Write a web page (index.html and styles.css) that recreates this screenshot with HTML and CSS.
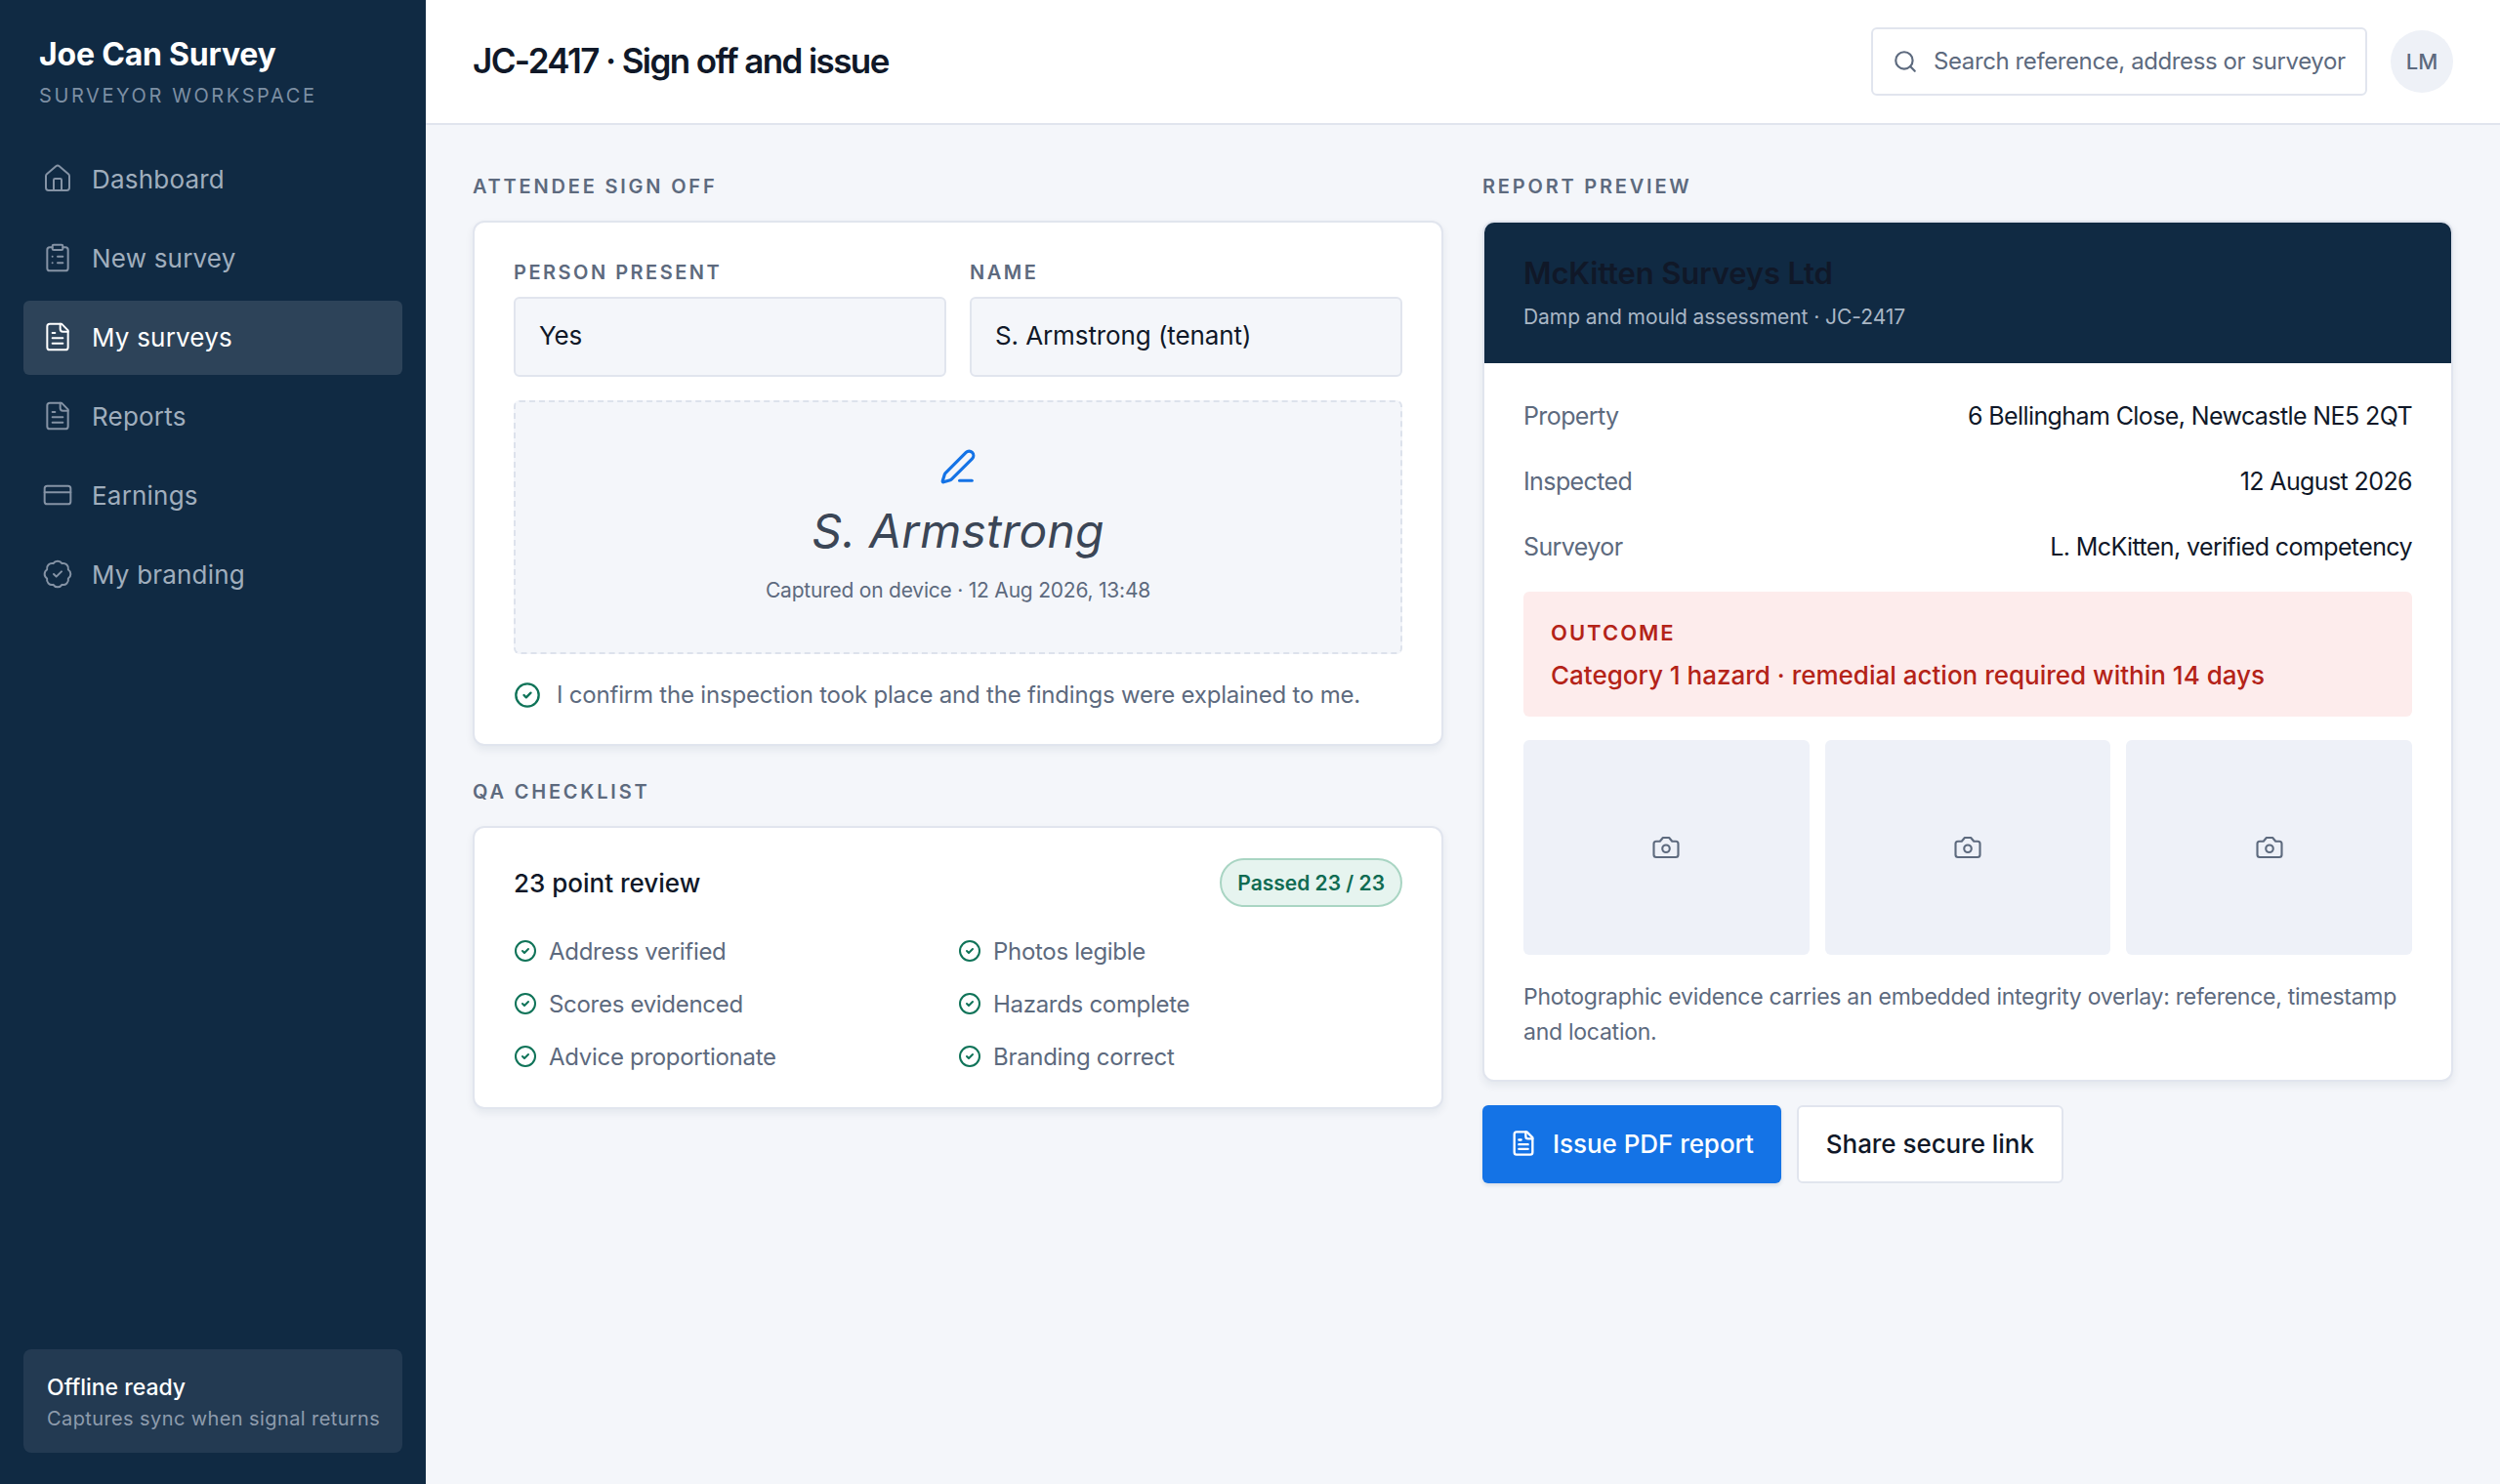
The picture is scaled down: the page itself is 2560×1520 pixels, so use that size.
FILE: index.html
```html
<!DOCTYPE html>
<html lang="en">
<head>
    <meta charset="UTF-8">
    <title>Joe Can Survey</title>
    <link rel="stylesheet" href="styles.css">
</head>
<body>
<div class="app">
    <aside class="sidebar">
        <div class="brand">
            <div class="brand-name">Joe Can Survey</div>
            <div class="brand-sub">SURVEYOR WORKSPACE</div>
        </div>
        <nav class="nav">
            <a class="nav-item"><svg class="nav-icon" viewBox="0 0 24 24"><path d="M15 21v-8a1 1 0 0 0-1-1h-4a1 1 0 0 0-1 1v8"/><path d="M3 10a2 2 0 0 1 .709-1.528l7-5.999a2 2 0 0 1 2.582 0l7 5.999A2 2 0 0 1 21 10v9a2 2 0 0 1-2 2H5a2 2 0 0 1-2-2z"/></svg>Dashboard</a>
            <a class="nav-item"><svg class="nav-icon" viewBox="0 0 24 24"><rect x="8" y="2" width="8" height="4" rx="1"/><path d="M16 4h2a2 2 0 0 1 2 2v14a2 2 0 0 1-2 2H6a2 2 0 0 1-2-2V6a2 2 0 0 1 2-2h2"/><path d="M12 11h4M12 16h4M8 11h.01M8 16h.01"/></svg>New survey</a>
            <a class="nav-item active"><svg class="nav-icon" viewBox="0 0 24 24"><path d="M15 2H6a2 2 0 0 0-2 2v16a2 2 0 0 0 2 2h12a2 2 0 0 0 2-2V7z"/><path d="M14 2v4a2 2 0 0 0 2 2h4"/><path d="M10 9H8M16 13H8M16 17H8"/></svg>My surveys</a>
            <a class="nav-item"><svg class="nav-icon" viewBox="0 0 24 24"><path d="M15 2H6a2 2 0 0 0-2 2v16a2 2 0 0 0 2 2h12a2 2 0 0 0 2-2V7z"/><path d="M14 2v4a2 2 0 0 0 2 2h4"/><path d="M10 9H8M16 13H8M16 17H8"/></svg>Reports</a>
            <a class="nav-item"><svg class="nav-icon" viewBox="0 0 24 24"><rect x="2" y="5" width="20" height="14" rx="2"/><path d="M2 10h20"/></svg>Earnings</a>
            <a class="nav-item"><svg class="nav-icon" viewBox="0 0 24 24"><path d="M3.85 8.62a4 4 0 0 1 4.78-4.77 4 4 0 0 1 6.74 0 4 4 0 0 1 4.78 4.78 4 4 0 0 1 0 6.74 4 4 0 0 1-4.77 4.78 4 4 0 0 1-6.75 0 4 4 0 0 1-4.78-4.77 4 4 0 0 1 0-6.76z"/><path d="M9 12l2 2 4-4"/></svg>My branding</a>
        </nav>
        <div class="offline">
            <div class="offline-title">Offline ready</div>
            <div class="offline-sub">Captures sync when signal returns</div>
        </div>
    </aside>
    <div class="main">
        <header class="topbar">
            <h1>JC-2417 · Sign off and issue</h1>
            <div class="topbar-right">
                <div class="search">
                    <svg class="search-icon" viewBox="0 0 24 24"><circle cx="11" cy="11" r="8"/><path d="M21 21l-4.3-4.3"/></svg>
                    <span>Search reference, address or surveyor</span>
                </div>
                <div class="avatar">LM</div>
            </div>
        </header>
        <div class="content">
            <section class="col-left">
                <h2 class="section-title">ATTENDEE SIGN OFF</h2>
                <div class="card signoff">
                    <div class="fields">
                        <div class="field">
                            <label>PERSON PRESENT</label>
                            <div class="input">Yes</div>
                        </div>
                        <div class="field">
                            <label>NAME</label>
                            <div class="input">S. Armstrong (tenant)</div>
                        </div>
                    </div>
                    <div class="signature">
                        <svg class="pen" viewBox="0 0 24 24"><path d="M13 21h8"/><path d="M21.174 6.812a1 1 0 0 0-3.986-3.987L3.842 16.174a2 2 0 0 0-.5.83l-1.321 4.352a.5.5 0 0 0 .623.622l4.353-1.32a2 2 0 0 0 .83-.497z"/></svg>
                        <div class="sig-name">S. Armstrong</div>
                        <div class="sig-meta">Captured on device · 12 Aug 2026, 13:48</div>
                    </div>
                    <div class="confirm">
                        <svg class="check" viewBox="0 0 24 24"><circle cx="12" cy="12" r="10"/><path d="M9 12l2 2 4-4"/></svg>
                        <span>I confirm the inspection took place and the findings were explained to me.</span>
                    </div>
                </div>
                <h2 class="section-title qa-title">QA CHECKLIST</h2>
                <div class="card qa">
                    <div class="qa-head">
                        <div class="qa-name">23 point review</div>
                        <div class="badge">Passed 23 / 23</div>
                    </div>
                    <div class="qa-grid">
                        <div class="qa-item"><svg class="check" viewBox="0 0 24 24"><circle cx="12" cy="12" r="10"/><path d="M9 12l2 2 4-4"/></svg>Address verified</div>
                        <div class="qa-item"><svg class="check" viewBox="0 0 24 24"><circle cx="12" cy="12" r="10"/><path d="M9 12l2 2 4-4"/></svg>Photos legible</div>
                        <div class="qa-item"><svg class="check" viewBox="0 0 24 24"><circle cx="12" cy="12" r="10"/><path d="M9 12l2 2 4-4"/></svg>Scores evidenced</div>
                        <div class="qa-item"><svg class="check" viewBox="0 0 24 24"><circle cx="12" cy="12" r="10"/><path d="M9 12l2 2 4-4"/></svg>Hazards complete</div>
                        <div class="qa-item"><svg class="check" viewBox="0 0 24 24"><circle cx="12" cy="12" r="10"/><path d="M9 12l2 2 4-4"/></svg>Advice proportionate</div>
                        <div class="qa-item"><svg class="check" viewBox="0 0 24 24"><circle cx="12" cy="12" r="10"/><path d="M9 12l2 2 4-4"/></svg>Branding correct</div>
                    </div>
                </div>
            </section>
            <section class="col-right">
                <h2 class="section-title">REPORT PREVIEW</h2>
                <div class="card report">
                    <div class="report-head">
                        <div class="report-company">McKitten Surveys Ltd</div>
                        <div class="report-sub">Damp and mould assessment · JC-2417</div>
                    </div>
                    <div class="report-body">
                        <div class="row"><span class="row-key">Property</span><span class="row-val">6 Bellingham Close, Newcastle NE5 2QT</span></div>
                        <div class="row"><span class="row-key">Inspected</span><span class="row-val">12 August 2026</span></div>
                        <div class="row"><span class="row-key">Surveyor</span><span class="row-val">L. McKitten, verified competency</span></div>
                        <div class="outcome">
                            <div class="outcome-label">OUTCOME</div>
                            <div class="outcome-text">Category 1 hazard · remedial action required within 14 days</div>
                        </div>
                        <div class="photos">
                            <div class="photo"><svg viewBox="0 0 24 24"><path d="M14.5 4h-5L7 7H4a2 2 0 0 0-2 2v9a2 2 0 0 0 2 2h16a2 2 0 0 0 2-2V9a2 2 0 0 0-2-2h-3z"/><circle cx="12" cy="13" r="3"/></svg></div>
                            <div class="photo"><svg viewBox="0 0 24 24"><path d="M14.5 4h-5L7 7H4a2 2 0 0 0-2 2v9a2 2 0 0 0 2 2h16a2 2 0 0 0 2-2V9a2 2 0 0 0-2-2h-3z"/><circle cx="12" cy="13" r="3"/></svg></div>
                            <div class="photo"><svg viewBox="0 0 24 24"><path d="M14.5 4h-5L7 7H4a2 2 0 0 0-2 2v9a2 2 0 0 0 2 2h16a2 2 0 0 0 2-2V9a2 2 0 0 0-2-2h-3z"/><circle cx="12" cy="13" r="3"/></svg></div>
                        </div>
                        <p class="photo-note">Photographic evidence carries an embedded integrity overlay: reference, timestamp and location.</p>
                    </div>
                </div>
                <div class="actions">
                    <button class="btn btn-primary"><svg viewBox="0 0 24 24"><path d="M15 2H6a2 2 0 0 0-2 2v16a2 2 0 0 0 2 2h12a2 2 0 0 0 2-2V7z"/><path d="M14 2v4a2 2 0 0 0 2 2h4"/><path d="M10 9H8M16 13H8M16 17H8"/></svg>Issue PDF report</button>
                    <button class="btn btn-secondary">Share secure link</button>
                </div>
            </section>
        </div>
    </div>
</div>
</body>
</html>
```

FILE: styles.css
```css
* {
    box-sizing: border-box;
}

body {
    margin: 0;
    font-family: Inter, "Liberation Sans", sans-serif;
    background-color: #f4f6fa;
    color: #101828;
}

svg {
    fill: none;
    stroke: currentColor;
    stroke-width: 2;
    stroke-linecap: round;
    stroke-linejoin: round;
    flex-shrink: 0;
}

.app {
    display: flex;
    height: 1520px;
}

/* Sidebar */
.sidebar {
    width: 436px;
    background-color: #102a43;
    padding: 0 24px 32px;
    display: flex;
    flex-direction: column;
}

.brand {
    padding: 36px 16px 0;
    height: 146px;
}

.brand-name {
    font-size: 32px;
    font-weight: 700;
    letter-spacing: -0.2px;
    line-height: 40px;
    color: #fff;
}

.brand-sub {
    font-size: 20px;
    letter-spacing: 2.6px;
    line-height: 28px;
    margin-top: 8px;
    color: #7d8fa3;
}

.nav {
    display: flex;
    flex-direction: column;
    gap: 5px;
}

.nav-item {
    display: flex;
    align-items: center;
    gap: 19px;
    height: 76px;
    padding: 0 16px 2px 19px;
    border-radius: 6px;
    font-size: 26px;
    letter-spacing: 0.2px;
    color: #a0aebd;
}

.nav-item.active {
    background-color: #2d4359;
    color: #fff;
}

.nav-icon {
    width: 32px;
    height: 32px;
    stroke-width: 1.5;
    color: #8593a5;
}

.active .nav-icon {
    color: #fff;
}

.offline {
    margin-top: auto;
    background-color: #233a52;
    border-radius: 8px;
    padding: 24px 24px;
    height: 106px;
}

.offline-title {
    font-size: 23px;
    font-weight: 500;
    color: #fff;
    line-height: 30px;
}

.offline-sub {
    font-size: 20px;
    letter-spacing: 0.4px;
    color: #8e9cad;
    line-height: 28px;
    margin-top: 3px;
    white-space: nowrap;
}

/* Top bar */
.main {
    flex: 1;
    display: flex;
    flex-direction: column;
}

.topbar {
    height: 128px;
    background-color: #fff;
    border-bottom: 2px solid #e1e5ee;
    display: flex;
    align-items: center;
    justify-content: space-between;
    padding: 0 48px;
}

h1 {
    margin: 0 0 2px;
    font-size: 35px;
    font-weight: 600;
    letter-spacing: -1.6px;
}

.topbar-right {
    display: flex;
    align-items: center;
    gap: 24px;
}

.search {
    width: 508px;
    height: 70px;
    border: 2px solid #e1e5ee;
    border-radius: 6px;
    display: flex;
    align-items: center;
    gap: 16px;
    padding: 0 20px;
    font-size: 24px;
    letter-spacing: -0.4px;
    color: #5d6a7e;
    white-space: nowrap;
}

.search span {
    margin-bottom: 2px;
}

.search-icon {
    width: 26px;
    height: 26px;
}

.avatar {
    width: 64px;
    height: 64px;
    border-radius: 50%;
    background-color: #eef1f7;
    display: flex;
    align-items: center;
    justify-content: center;
    font-size: 22px;
    font-weight: 500;
    color: #5d6a7e;
}

/* Content */
.content {
    display: grid;
    grid-template-columns: 1fr 1fr;
    gap: 40px;
    padding: 49px 48px 48px;
    align-items: start;
}

.section-title {
    margin: 0 0 21px;
    font-size: 20px;
    font-weight: 600;
    letter-spacing: 2.8px;
    line-height: 28px;
    color: #5d6a7e;
}

.card {
    background-color: #fff;
    border: 2px solid #e1e5ee;
    border-radius: 12px;
    box-shadow: 0 4px 8px rgba(16, 42, 67, 0.07);
}

.signoff {
    padding: 37px 40px 30px;
}

.fields {
    display: grid;
    grid-template-columns: 1fr 1fr;
    gap: 24px;
}

.field label {
    display: block;
    font-size: 20px;
    font-weight: 600;
    letter-spacing: 2.5px;
    line-height: 28px;
    color: #5d6a7e;
    margin-bottom: 11px;
}

.input {
    height: 82px;
    background-color: #f4f6fa;
    border: 2px solid #e1e5ee;
    border-radius: 6px;
    display: flex;
    align-items: center;
    padding: 0 24px 4px;
    font-size: 26px;
    letter-spacing: -0.1px;
}

.signature {
    margin-top: 24px;
    height: 260px;
    background-color: #f4f6fa;
    border: 2px dashed #dde2ec;
    border-radius: 6px;
    display: flex;
    flex-direction: column;
    align-items: center;
    padding-top: 47px;
}

.pen {
    width: 38px;
    height: 38px;
    color: #1473e6;
}

.sig-name {
    font-size: 48px;
    font-style: italic;
    line-height: 60px;
    letter-spacing: 0.2px;
    color: #3b4656;
    margin-top: 17px;
}

.sig-meta {
    font-size: 21px;
    letter-spacing: -0.22px;
    color: #5d6a7e;
    line-height: 30px;
    margin-top: 16px;
}

.confirm {
    display: flex;
    align-items: center;
    gap: 16px;
    margin-top: 22px;
    font-size: 24px;
    letter-spacing: -0.2px;
    color: #5d6a7e;
    line-height: 40px;
    white-space: nowrap;
}

.check {
    width: 28px;
    height: 28px;
    color: #0f7358;
}

.qa-title {
    margin-top: 33px;
}

.qa {
    padding: 31px 40px 25px;
}

.qa-head {
    display: flex;
    justify-content: space-between;
    align-items: center;
    margin-bottom: 18px;
}

.qa-name {
    font-size: 26px;
    font-weight: 500;
}

.badge {
    height: 50px;
    padding: 0 16px;
    background-color: #e6f4ef;
    border: 2px solid #a9d5c3;
    border-radius: 25px;
    display: flex;
    align-items: center;
    font-size: 21px;
    font-weight: 600;
    color: #0f6b52;
}

.qa-grid {
    display: grid;
    grid-template-columns: 1fr 1fr;
}

.qa-item {
    display: flex;
    align-items: center;
    gap: 12px;
    height: 54px;
    font-size: 24px;
    letter-spacing: -0.3px;
    color: #5d6a7e;
}

.qa-item .check {
    width: 24px;
    height: 24px;
}

/* Report preview */
.report {
    overflow: hidden;
}

.report-head {
    height: 144px;
    background-color: #102a43;
    padding: 32px 40px 0;
}

.report-company {
    font-size: 31px;
    font-weight: 600;
    letter-spacing: -0.15px;
    line-height: 40px;
    color: #101828;
}

.report-sub {
    font-size: 21px;
    letter-spacing: -0.05px;
    line-height: 30px;
    margin-top: 10px;
    color: #a9b6c5;
}

.report-body {
    padding: 21px 40px 31px;
}

.row {
    display: flex;
    justify-content: space-between;
    align-items: center;
    height: 67px;
    padding-bottom: 2px;
    font-size: 25px;
    letter-spacing: -0.6px;
}

.row-key {
    color: #5d6a7e;
}

.outcome {
    margin-top: 12px;
    background-color: #fdecec;
    border-radius: 6px;
    padding: 27px 28px;
    height: 128px;
}

.outcome-label {
    font-size: 22px;
    font-weight: 600;
    letter-spacing: 2px;
    line-height: 30px;
    color: #b42318;
}

.outcome-text {
    font-size: 26px;
    font-weight: 500;
    line-height: 36px;
    margin-top: 11px;
    color: #b42318;
}

.photos {
    display: grid;
    grid-template-columns: repeat(3, 1fr);
    gap: 16px;
    margin-top: 24px;
}

.photo {
    height: 220px;
    background-color: #eef1f8;
    border-radius: 6px;
    display: flex;
    align-items: center;
    justify-content: center;
    color: #5d6a7e;
}

.photo svg {
    width: 30px;
    height: 30px;
    stroke-width: 1.7;
}

.photo-note {
    margin: 25px 0 0;
    font-size: 23px;
    letter-spacing: -0.26px;
    line-height: 36px;
    color: #5d6a7e;
}

.actions {
    display: flex;
    gap: 16px;
    margin-top: 24px;
}

.btn {
    height: 80px;
    border-radius: 6px;
    font-family: inherit;
    font-size: 26px;
    font-weight: 500;
    letter-spacing: -0.05px;
    display: flex;
    align-items: center;
    gap: 16px;
    padding: 0 28px 2px;
}

.btn svg {
    width: 28px;
    height: 28px;
}

.btn-primary {
    background-color: #1473e6;
    border: none;
    color: #fff;
    box-shadow: 0 2px 4px rgba(16, 42, 67, 0.12);
}

.btn-secondary {
    background-color: #fff;
    border: 2px solid #e1e5ee;
    color: #101828;
}
```
